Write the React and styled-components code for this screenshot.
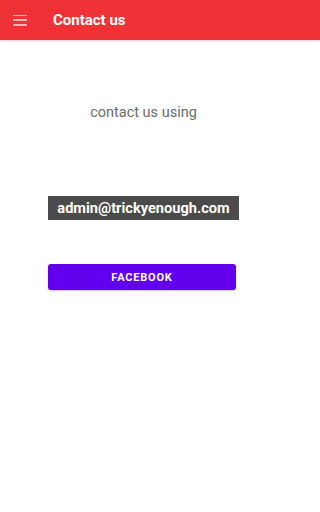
import React from 'react'
import styled, { createGlobalStyle } from 'styled-components'

const Global = createGlobalStyle`
    body {
        margin: 0;
        font-family: Roboto, "Liberation Sans", sans-serif;
        background: #ffffff;
    }
`

const Screen = styled.div`
    display: flex;
    flex-direction: column;
    width: 100%;
    height: 512px;
`

const AppBar = styled.header`
    display: flex;
    align-items: center;
    height: 40px;
    padding-left: 13px;
    background: #ef3236;
    box-shadow: 0 1px 2px rgba(0, 0, 0, 0.2);
`

const Menu = styled.div`
    display: flex;
    flex-direction: column;
    justify-content: space-between;
    width: 14px;
    height: 11px;
    margin-right: 26px;
    span {
        display: block;
        height: 1.5px;
        background: #ffb3b4;
    }
`

const Title = styled.h1`
    margin: 0;
    font-size: 15px;
    font-weight: 700;
    color: #ffffff;
`

const Body = styled.main`
    display: flex;
    flex-direction: column;
    align-items: center;
    width: 287px;
    padding-top: 64px;
`

const Lead = styled.p`
    margin: 0;
    font-size: 14.5px;
    color: #6b6b6b;
`

const Email = styled.div`
    margin-top: 75px;
    width: 191px;
    height: 24px;
    display: flex;
    align-items: center;
    justify-content: center;
    background: #4b4b4b;
    color: #ffffff;
    font-size: 14.6px;
    font-weight: 700;
`

const Button = styled.button`
    margin-top: 44px;
    margin-right: 3px;
    width: 188px;
    height: 26px;
    border: none;
    border-radius: 3px;
    background: #6200ee;
    color: #ffffff;
    font-family: Roboto, "Liberation Sans", sans-serif;
    font-size: 11px;
    font-weight: 700;
    letter-spacing: 0.8px;
    box-shadow: 0 1px 2px rgba(0, 0, 0, 0.25);
`

export default function App() {
    return (
        <Screen>
            <Global />
            <AppBar>
                <Menu><span /><span /><span /></Menu>
                <Title>Contact us</Title>
            </AppBar>
            <Body>
                <Lead>contact us using</Lead>
                <Email>admin@trickyenough.com</Email>
                <Button>FACEBOOK</Button>
            </Body>
        </Screen>
    )
}
